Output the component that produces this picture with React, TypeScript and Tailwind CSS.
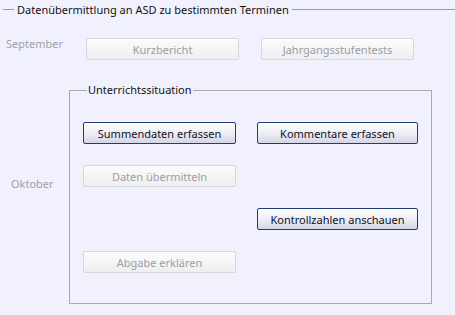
const enabledBtn =
  "h-[22px] rounded-[2px] border border-[#1f3f73] bg-gradient-to-b from-[#fdfdff] via-[#eeeef6] to-[#d4d5e4] text-[11px] text-[#111122] shadow-[inset_0_1px_0_#ffffff]";
const disabledBtn =
  "h-[22px] rounded-[2px] border border-[#d6d6dc] bg-gradient-to-b from-[#fcfcfc] to-[#eeeef2] text-[11px] text-[#9c9ca4]";

export default function App() {
  return (
    <div className="w-[455px] h-[315px] overflow-hidden bg-[#f1f1fd] font-['Noto_Sans',sans-serif] text-[11px] leading-none">
      {/* header line */}
      <div className="flex items-center pt-[1px] h-[16px] box-content">
        <div className="ml-[3px] w-[11px] h-px bg-[#9a9aa4]" />
        <span className="px-[3px] text-[#111]">
          Datenübermittlung an ASD zu bestimmten Terminen
        </span>
        <div className="flex-1 h-px bg-[#9a9aa4]" />
      </div>

      {/* September */}
      <div className="flex items-start mt-[21px]">
        <div className="w-[86px] pl-[6px] text-[#a0a0a8]">September</div>
        <button disabled className={`${disabledBtn} w-[153px]`}>
          Kurzbericht
        </button>
        <button disabled className={`${disabledBtn} w-[153px] ml-[22px]`}>
          Jahrgangsstufentests
        </button>
      </div>

      {/* Oktober */}
      <div className="flex items-start mt-[22px]">
        <div className="w-[69px] pl-[11px] pt-[96px] text-[#a0a0a8]">Oktober</div>
        <fieldset className="w-[363px] h-[222px] border border-[#a9a9b4] px-[13px] pt-[24px]">
          <legend className="ml-[4px] px-[1px] h-[16px] leading-[16px] text-[#111]">
            Unterrichtssituation
          </legend>
          <div className="grid grid-cols-[153px_161px] gap-x-[21px] gap-y-[21px]">
            <button className={enabledBtn}>Summendaten erfassen</button>
            <button className={enabledBtn}>Kommentare erfassen</button>
            <button disabled className={disabledBtn}>
              Daten übermitteln
            </button>
            <div />
            <div className="h-[22px]" />
            <button className={enabledBtn}>Kontrollzahlen anschauen</button>
            <button disabled className={disabledBtn}>
              Abgabe erklären
            </button>
            <div />
          </div>
        </fieldset>
      </div>
    </div>
  );
}
